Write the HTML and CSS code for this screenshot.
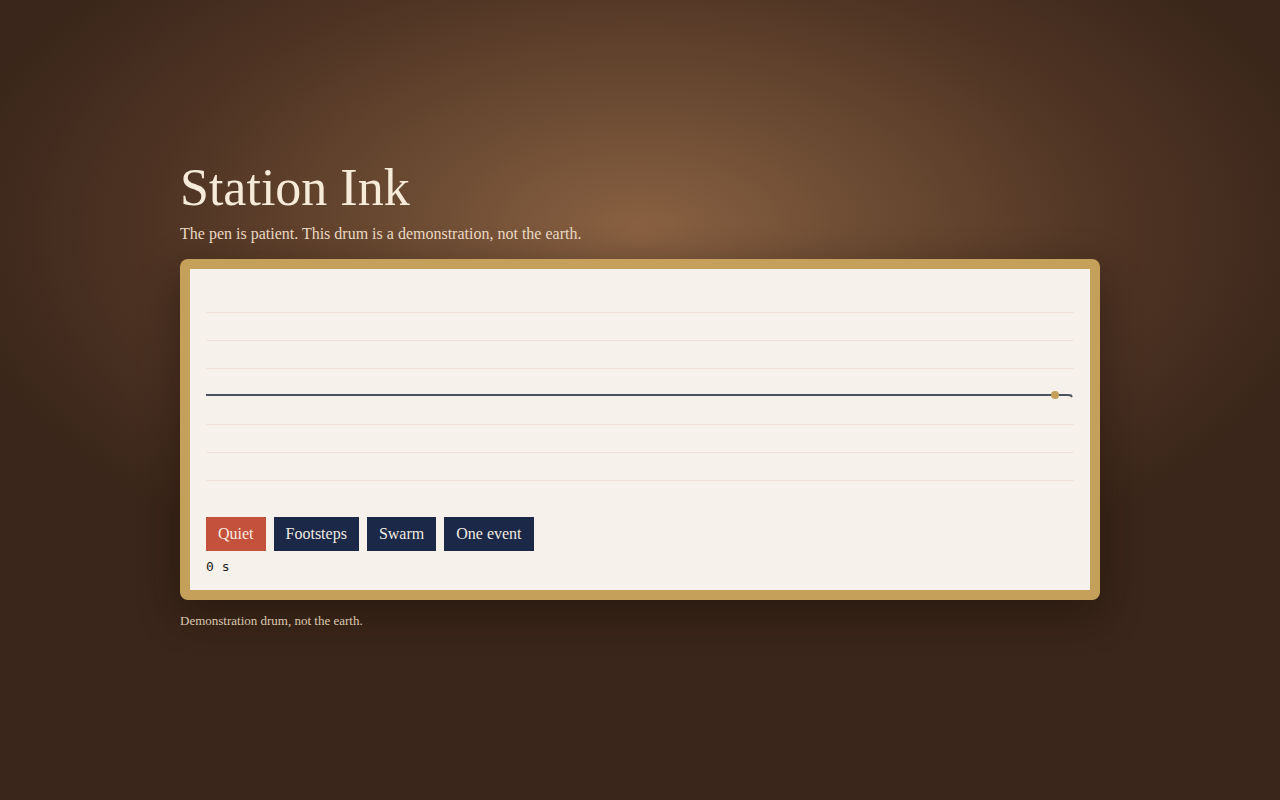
FILE: index.html
```html
<!DOCTYPE html>
<html lang="en">
<head>
<meta charset="utf-8">
<title>Station Ink</title>
<link rel="stylesheet" href="styles.css">
</head>
<body>
<main class="page">
  <h1 class="title">Station Ink</h1>
  <p class="subtitle">The pen is patient. This drum is a demonstration, not the earth.</p>
  <section class="frame">
    <div class="paper">
      <svg class="drum" viewBox="0 0 868 224" width="868" height="224" preserveAspectRatio="none">
        <g class="grid">
          <line x1="0" y1="27.5" x2="868" y2="27.5"/>
          <line x1="0" y1="55.5" x2="868" y2="55.5"/>
          <line x1="0" y1="83.5" x2="868" y2="83.5"/>
          <line x1="0" y1="139.5" x2="868" y2="139.5"/>
          <line x1="0" y1="167.5" x2="868" y2="167.5"/>
          <line x1="0" y1="195.5" x2="868" y2="195.5"/>
        </g>
        <polyline class="trace" points="0,110 862,110 865,110.5 866,112"/>
        <circle class="pen" cx="849" cy="110" r="4"/>
      </svg>
      <div class="controls">
        <button class="btn active">Quiet</button>
        <button class="btn">Footsteps</button>
        <button class="btn">Swarm</button>
        <button class="btn">One event</button>
      </div>
      <div class="clock">0 s</div>
    </div>
  </section>
  <p class="footnote">Demonstration drum, not the earth.</p>
</main>
</body>
</html>
```
FILE: styles.css
```css
html, body {
  margin: 0;
  height: 100%;
}
body {
  font-family: "Liberation Serif", "Times New Roman", serif;
  background: radial-gradient(ellipse 700px 380px at 640px 230px, #8a6142 0%, #6a4a32 35%, #4e3323 70%, #3a261a 100%);
  background-color: #38261a;
  min-height: 800px;
}
.page {
  width: 920px;
  margin: 0 auto;
  padding-top: 159px;
}
.title {
  margin: 0;
  font-weight: normal;
  font-size: 52px;
  line-height: 1.1;
  color: #f6ead8;
}
.subtitle {
  margin: 7px 0 13px;
  font-size: 16px;
  line-height: 1.4;
  color: #ead8c2;
}
.frame {
  background: #c4a05a;
  padding: 10px;
  border-radius: 8px;
  box-shadow: 0 12px 40px rgba(20, 10, 4, 0.45);
}
.paper {
  background: #f6f1ea;
  padding: 16px 16px 16px;
}
.drum {
  display: block;
  width: 868px;
  height: 224px;
}
.grid line {
  stroke: #eee2d9;
  stroke-width: 1;
}
.trace {
  fill: none;
  stroke: #4a5262;
  stroke-width: 2;
}
.pen {
  fill: #c4a05a;
}
.controls {
  display: flex;
  gap: 8px;
  margin-top: 8px;
}
.btn {
  font-family: "Liberation Serif", "Times New Roman", serif;
  font-size: 16px;
  height: 34px;
  padding: 0 12px;
  border: none;
  border-radius: 0;
  background: #1b2848;
  color: #f0ebe2;
  cursor: pointer;
}
.btn.active {
  background: #c4513b;
  color: #f8ebe0;
}
.clock {
  margin-top: 8px;
  font-family: "DejaVu Sans Mono", "Liberation Mono", monospace;
  font-size: 13px;
  line-height: 15px;
  color: #1c1c1c;
}
.footnote {
  margin: 12px 0 0;
  font-size: 13px;
  line-height: 1.4;
  color: #dcc8ae;
}
```
